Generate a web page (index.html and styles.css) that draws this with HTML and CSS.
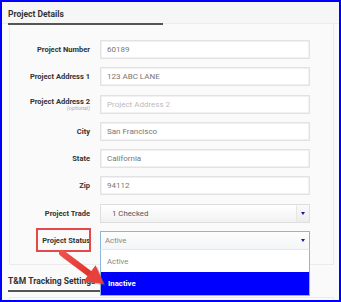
FILE: index.html
```html
<!DOCTYPE html>
<html>
<head>
<meta charset="utf-8">
<link rel="stylesheet" href="styles.css">
</head>
<body>
<div class="frame">
  <div class="head-band">
    <div class="title">Project Details</div>
  </div>
  <div class="panel">
    <div class="form">
      <div class="label">Project Number</div>
      <div class="input">60189</div>

      <div class="label">Project Address 1</div>
      <div class="input">123 ABC LANE</div>

      <div class="label stacked"><span>Project Address 2</span><span class="opt">(optional)</span></div>
      <div class="input placeholder">Project Address 2</div>

      <div class="label">City</div>
      <div class="input">San Francisco</div>

      <div class="label">State</div>
      <div class="input">California</div>

      <div class="label">Zip</div>
      <div class="input">94112</div>

      <div class="label">Project Trade</div>
      <div class="select"><span class="sel-text trade">1 Checked</span><span class="caret-box"><span class="caret"></span></span></div>

      <div class="label status-label">Project Status<span class="callout"></span></div>
      <div class="select open"><span class="sel-text">Active</span><span class="caret-box plain"><span class="caret"></span></span>
        <div class="menu">
          <div class="opt-item">Active</div>
          <div class="opt-item selected">Inactive</div>
        </div>
      </div>
    </div>
  </div>
  <div class="title second">T&amp;M Tracking Settings</div>
  <div class="panel next"></div>
  <svg class="arrow" width="341" height="302" viewBox="0 0 341 302">
    <defs>
      <linearGradient id="ag" x1="0" y1="0" x2="1" y2="1">
        <stop offset="0" stop-color="#f0504a"/>
        <stop offset="1" stop-color="#e2332e"/>
      </linearGradient>
    </defs>
    <g opacity="0.35" transform="translate(1.5,1.5)">
      <line x1="62" y1="253" x2="90" y2="274" stroke="#777" stroke-width="6"/>
      <polygon points="104,284 83.6,281.2 95.6,265.2" fill="#777"/>
    </g>
    <line x1="62" y1="253" x2="90" y2="274" stroke="url(#ag)" stroke-width="6" stroke-linecap="round"/>
    <polygon points="104,284 83.6,281.2 95.6,265.2" fill="#e8403a"/>
  </svg>
</div>
</body>
</html>
```
FILE: styles.css
```css
html, body {
  margin: 0;
  padding: 0;
}
body {
  width: 341px;
  height: 302px;
  overflow: hidden;
  font-family: Roboto, "Liberation Sans", Arial, sans-serif;
  color: #333;
}
.frame {
  position: relative;
  box-sizing: border-box;
  width: 341px;
  height: 302px;
  border: 2px solid #0000ff;
  background: #fafafa;
  overflow: hidden;
}
.head-band {
  background: #f6f6f6;
  height: 21px;
  border-bottom: 1px solid #ececec;
  padding-left: 6px;
}
.title {
  display: inline-block;
  font-weight: bold;
  font-size: 8.5px;
  line-height: 11px;
  padding-top: 1px;
  padding-bottom: 3px;
  padding-right: 99px;
  border-bottom: 2px solid #555;
  color: #333;
}
.panel {
  margin-left: 7px;
  width: 325px;
  box-sizing: border-box;
  border: 1px solid #ebebeb;
  border-top: none;
  height: 241px;
  padding-top: 16px;
}
.form {
  display: grid;
  grid-template-columns: 80px 210px;
  grid-auto-rows: 19px;
  column-gap: 10px;
  row-gap: 8.3px;
}
.label {
  display: flex;
  align-items: center;
  justify-content: flex-end;
  font-weight: bold;
  font-size: 7.5px;
  color: #333;
  white-space: nowrap;
}
.label.stacked {
  flex-direction: column;
  align-items: flex-end;
  justify-content: center;
  line-height: 8px;
}
.opt {
  font-weight: normal;
  font-style: italic;
  font-size: 5.5px;
  line-height: 5px;
  color: #aaa;
}
.input {
  box-sizing: border-box;
  background: #fff;
  border: 1px solid #e2e2e2;
  box-shadow: inset 0 0 0 1px #f1f1f1;
  font-size: 8px;
  color: #777;
  padding-left: 6px;
  display: flex;
  align-items: center;
}
.input.placeholder {
  color: #bbb;
}
.select {
  position: relative;
  box-sizing: border-box;
  border: 1px solid #dedede;
  background: linear-gradient(#ffffff, #f1f1f1);
  font-size: 7.8px;
  color: #666;
  display: flex;
  align-items: center;
}
.sel-text {
  flex: 1;
  padding-left: 4px;
}
.sel-text.trade {
  padding-left: 11px;
  color: #555;
}
.caret-box {
  width: 12px;
  align-self: stretch;
  border-left: 1px solid #e6e6e6;
  background: linear-gradient(#fafafa, #ececec);
  display: flex;
  align-items: center;
  justify-content: center;
}
.caret-box.plain {
  border-left: none;
  background: none;
}
.caret {
  width: 0;
  height: 0;
  border-left: 2.5px solid transparent;
  border-right: 2.5px solid transparent;
  border-top: 3px solid #1a1aa0;
}
.select.open {
  border-color: #8db6d8;
  background: linear-gradient(#fdfdfd, #f3f5f8);
  color: #888;
}
.menu {
  position: absolute;
  left: -1px;
  top: 17px;
  width: 210px;
  box-sizing: border-box;
  border: 1px solid #8db6d8;
  border-top: 1px solid #e6e6e6;
  background: #fff;
  z-index: 2;
}
.opt-item {
  height: 22px;
  display: flex;
  align-items: center;
  padding-left: 6px;
  font-size: 7.8px;
  color: #888;
}
.opt-item.selected {
  height: 23px;
  background: #0000ff;
  color: #fff;
  font-weight: bold;
  padding-left: 7px;
}
.status-label {
  position: relative;
}
.callout {
  position: absolute;
  left: 26px;
  top: -3px;
  width: 55px;
  height: 24px;
  box-sizing: border-box;
  border: 2px solid #e4484a;
}
.title.second {
  margin-left: 6px;
  margin-top: 10px;
  padding-right: 6px;
  font-size: 8.5px;
}
.panel.next {
  margin-top: 5px;
  border-top: 1px solid #ebebeb;
  height: 20px;
  padding: 0;
}
.arrow {
  position: absolute;
  left: -2px;
  top: -2px;
  z-index: 3;
  pointer-events: none;
}
```
